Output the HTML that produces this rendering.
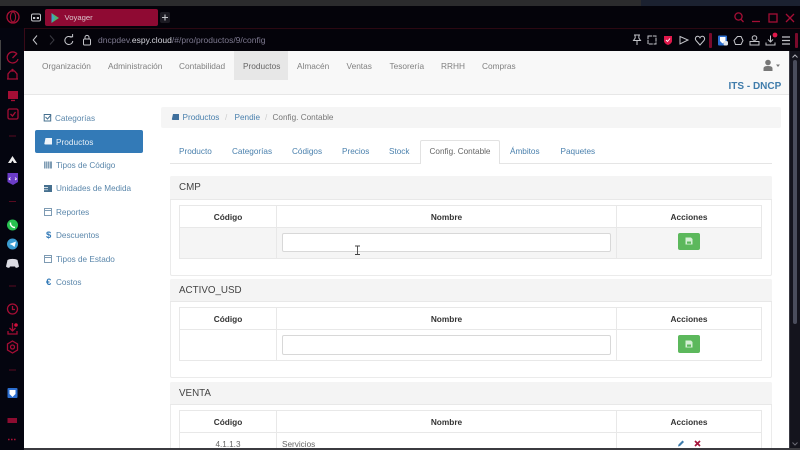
<!DOCTYPE html>
<html lang="es"><head><meta charset="utf-8"><title>Voyager</title>
<style>
html,body{margin:0;padding:0;background:#04030a}
#r{position:relative;width:800px;height:450px;overflow:hidden;background:#04030a;font-family:"Liberation Sans",sans-serif;font-size:8.2px;color:#555;filter:blur(.3px)}
#r div,#r span.t,#r svg{position:absolute}
.t{position:absolute;white-space:nowrap;line-height:12px}
.c{text-align:center}
.lk{color:#4a80ad}
.sb{color:#5b87ab;font-size:8.2px}
.nv{color:#808080;font-size:8.3px;top:60px}
.h{font-size:9.8px;color:#444}
.th{font-weight:bold;color:#333;font-size:8.3px;text-align:center}
.ic{fill:none;stroke:#a50e35;stroke-width:1.3}
.wh{fill:none;stroke:#c4c5ca;stroke-width:1}
.panel{background:#fff;border:1px solid #ebebeb;border-radius:2px;box-sizing:border-box}
.ph{background:#f4f4f4;border-bottom:1px solid #e8e8e8;box-sizing:border-box;border-radius:2px 2px 0 0}
.tb{border:1px solid #e8e8e8;box-sizing:border-box;background:#fff}
.ln{background:#e8e8e8}
.inp{background:#fff;border:1px solid #d8d8d8;border-radius:2px;box-sizing:border-box}
.btn{background:#5cb85c;border-radius:2px}
</style></head>
<body><div id="r">
<!-- top strip -->
<div style="left:0;top:0;width:641px;height:6px;background:#2b2b2d"></div>
<div style="left:641px;top:0;width:159px;height:6px;background:#1b2130"></div>
<!-- tab bar -->
<svg style="left:0;top:6px" width="24" height="22"><circle cx="13" cy="11" r="6" fill="none" stroke="#a81035" stroke-width="1.3"/><ellipse cx="13" cy="11" rx="2.6" ry="5" fill="none" stroke="#a81035" stroke-width="1.1"/></svg>
<svg style="left:30px;top:12px" width="14" height="11"><rect x="1.5" y="2" width="9" height="7" rx="1.5" class="wh"/><rect x="3" y="5" width="2.2" height="2" fill="#c4c5ca"/><rect x="6.8" y="5" width="2.2" height="2" fill="#c4c5ca"/></svg>
<div style="left:45px;top:9px;width:113px;height:17px;background:#8f0a33;border-radius:2px"></div>
<svg style="left:50px;top:12px" width="11" height="12"><polygon points="1.5,1 9,6 1.5,11" fill="#4fb36a"/><polygon points="1.5,1 5,6 1.5,11" fill="#3ea4c4"/></svg>
<span class="t" style="left:64.5px;top:11.5px;font-size:7.7px;color:#dcc5cd">Voyager</span>
<div style="left:160px;top:12px;width:10px;height:11px;background:#1b1a22;border-radius:2px"></div>
<svg style="left:160px;top:12px" width="10" height="11"><path d="M5 2.5V8.5M2 5.5H8" stroke="#c4c5ca" stroke-width="1.1"/></svg>
<!-- window controls -->
<svg style="left:730px;top:10px" width="70" height="16">
<circle cx="8.5" cy="6.5" r="3.6" class="ic"/><path d="M11 9.3L13.5 12" class="ic"/>
<path d="M22 11.5H30" class="ic"/>
<rect x="39" y="4" width="8" height="8" class="ic"/>
<path d="M56 4L64 12M64 4L56 12" class="ic"/></svg>
<!-- address bar -->
<div style="left:24px;top:28px;width:776px;height:1px;background:#2c0812"></div>
<div style="left:24px;top:28px;width:1px;height:23px;background:#3a0a18"></div>
<svg style="left:30px;top:33px" width="70" height="14">
<path d="M7 2.5L3.2 7L7 11.5" class="wh"/>
<path d="M20 2.5L24 7L20 11.5" fill="none" stroke="#3a3a42" stroke-width="1"/>
<path d="M41.5 4.5A4 4 0 1 0 42.8 8" class="wh"/><path d="M39.5 3.7L42.6 3.7L42.6 1" class="wh"/>
</svg>
<svg style="left:82px;top:34px" width="10" height="12"><rect x="1.5" y="5" width="7" height="6" rx="1" class="wh"/><path d="M3 5V3.4a2 2 0 0 1 4 0V5" class="wh"/></svg>
<span class="t" style="left:98px;top:34px;font-size:8.5px;color:#7d798f">dncpdev.<span style="color:#d4d4dc">espy.cloud</span>/#/pro/productos/9/config</span>
<svg style="left:630px;top:30px" width="130" height="21">
<path d="M4 5H10M5 5L5.2 8L3.5 10.5H10.5L8.8 8L9 5M7 10.5V15" class="wh"/>
<rect x="18" y="6" width="8" height="8" fill="none" stroke="#c4c5ca" stroke-width="1" stroke-dasharray="4 .8"/>
<path d="M34 6H42V11C42 13 39.5 14.5 38 15C36.5 14.5 34 13 34 11Z" fill="#e0184b"/><path d="M36 10L37.5 11.5L40 8.5" stroke="#fff" stroke-width=".9" fill="none"/>
<path d="M50 6.5L58 10L50 14Z" class="wh"/>
<path d="M70 15L66 10.5C64.5 8.5 66 6 68 6.3C69 6.5 69.6 7 70 7.8C70.4 7 71 6.5 72 6.3C74 6 75.5 8.5 74 10.5Z" class="wh"/>
<rect x="79" y="3" width="3" height="15" fill="#7a0a2b" rx="1"/>
<rect x="88" y="5.5" width="9" height="10" fill="#2d6fd0" rx="1"/><path d="M90 7H95.5V11L92.5 13.5L90 11Z" fill="#fff"/><rect x="93.5" y="11" width="4.5" height="4.5" rx="1.5" fill="#dfe3ea"/>
<path d="M104 10.5L107.5 6.5H111L113 10.5L111 14.5H105.5Z" class="wh"/>
<rect x="120" y="11.5" width="9" height="3.5" class="wh"/><circle cx="124.5" cy="8" r="2.3" class="wh"/>
</svg>
<svg style="left:760px;top:30px" width="40" height="21">
<path d="M10.5 5.5V12M8 9.5L10.5 12L13 9.5M6 12.5V15H15V12.5" class="wh"/>
<circle cx="15" cy="5" r="2.4" fill="#e0184b"/>
<path d="M22 7H30M22 10.5H30M22 14H30" stroke="#c4c5ca" stroke-width="1.2"/>
<rect x="35" y="3" width="3" height="15" fill="#7a0a2b" rx="1"/>
</svg>
<!-- left sidebar -->
<div style="left:0;top:28px;width:24px;height:422px;background:#04050f"></div>
<div style="left:0;top:40px;width:1px;height:30px;background:#444"></div>
<svg style="left:0;top:50px" width="24" height="400">
<path d="M17 4A5.5 5.5 0 1 0 18 9" class="ic"/><path d="M12.5 8L17 3.5" class="ic"/>
<path d="M8 29V24L10.5 21H14.5L17 24V29ZM7 29H18" class="ic"/><circle cx="12.5" cy="20" r="1.2" fill="#a50e35"/>
<rect x="8" y="41" width="10" height="8" fill="#a50e35"/><path d="M11 50.5H15" class="ic"/>
<rect x="8" y="59" width="10" height="10" rx="1.5" class="ic"/><path d="M10.5 64L12.5 66L15.5 62" class="ic"/>
<path d="M9 86H16" stroke="#5a0a20" stroke-width="1"/>
<path d="M12.5 106L8 113H11L12.5 110.5L14 113H17Z" fill="#ececec"/>
<path d="M7.5 123H18V132L13 135L7.5 132Z" fill="#6b3cc7"/><path d="M10.5 127.5L9 129L10.5 130M15 127.5L16.5 129L15 130" stroke="#fff" stroke-width=".8" fill="none"/>
<path d="M9 151.5H16" stroke="#5a0a20" stroke-width="1"/>
<circle cx="12.5" cy="175" r="5.5" fill="#27c04f"/><path d="M10.5 172.5C10 175 12 177.5 15 177.5" stroke="#fff" stroke-width="1.4" fill="none"/>
<circle cx="12.5" cy="194" r="5.5" fill="#3a9bd0"/><path d="M9.5 194L16 191.5L14.5 197L12 195Z" fill="#fff"/>
<path d="M7.5 210C10 208.5 15 208.5 17.5 210L19 216.5C17.5 218 16 218 15.5 217.5L15 216.5H10L9.5 217.5C9 218 7.5 218 6 216.5Z" fill="#dcdce4"/>
<path d="M9 236H16" stroke="#5a0a20" stroke-width="1"/>
<circle cx="12.5" cy="259" r="5" class="ic"/><path d="M12.5 256V259.5H15" class="ic"/>
<path d="M12.5 273V281M9.5 278L12.5 281L15.5 278M8 281V284H17V281" class="ic"/><circle cx="16" cy="275" r="1.8" fill="#d0103c"/>
<path d="M12.5 291L17.5 294V300L12.5 303L7.5 300V294Z" class="ic"/><circle cx="12.5" cy="297" r="2" class="ic"/>
<path d="M9 320H16" stroke="#5a0a20" stroke-width="1"/>
<rect x="7.5" y="338" width="10" height="10" rx="1" fill="#2d6fd0"/><path d="M9.5 340H15.5V344L12.5 347L9.5 344Z" fill="#fff"/>
<rect x="7.5" y="368" width="9.5" height="5" fill="#8c0c30"/>
<path d="M8 389.5H17" stroke="#a81035" stroke-width="1.4" stroke-dasharray="1.6 1.4"/>
</svg>
<!-- page -->
<div style="left:24px;top:51px;width:765px;height:397px;background:#fff;overflow:hidden"></div>
<!-- navbar -->
<div style="left:24px;top:51px;width:765px;height:44px;background:#f8f8f8;border-bottom:1px solid #e7e7e7;box-sizing:border-box"></div>
<div style="left:234px;top:51px;width:54px;height:29px;background:#e7e7e7"></div>
<span class="t nv" style="left:42px">Organización</span>
<span class="t nv" style="left:108px">Administración</span>
<span class="t nv" style="left:179px">Contabilidad</span>
<span class="t nv" style="left:243px;color:#666">Productos</span>
<span class="t nv" style="left:297px">Almacén</span>
<span class="t nv" style="left:346.5px">Ventas</span>
<span class="t nv" style="left:389.5px">Tesorería</span>
<span class="t nv" style="left:441px">RRHH</span>
<span class="t nv" style="left:482px">Compras</span>
<svg style="left:762px;top:59px" width="22" height="14"><circle cx="6" cy="3.5" r="2.8" fill="#777"/><path d="M1.5 12V9.5C1.5 7.5 3.5 7 6 7S10.5 7.5 10.5 9.5V12Z" fill="#777"/><path d="M14 5.5H18L16 8Z" fill="#777"/></svg>
<span class="t" style="left:728.5px;top:81px;font-size:10px;font-weight:bold;color:#3f7cab">ITS - DNCP</span>
<!-- side nav -->
<div style="left:35px;top:130px;width:108px;height:23px;background:#337ab7;border-radius:2px"></div>
<svg style="left:43px;top:113px" width="10" height="180">
<rect x="1.2" y="1.5" width="6.5" height="6.5" fill="none" stroke="#46708f" stroke-width="1"/><path d="M2.5 4L4.5 6L8 2" stroke="#46708f" fill="none"/>
<path d="M2.5 25H9V31.5H2.5C1.5 31.5 1 31 1.5 30Z" fill="#eef4fa"/>
<path d="M1 48.5H9V55.5H1Z" fill="#7e9bb3"/><path d="M2.8 48.5V55.5M4.6 48.5V55.5M6.4 48.5V55.5" stroke="#fff" stroke-width=".5"/>
<path d="M1 72H9V79H1Z" fill="#46708f"/><path d="M1 74.5H5M1 76.8H5" stroke="#fff" stroke-width=".7"/>
<rect x="1.5" y="95.5" width="7" height="7" fill="none" stroke="#7e9bb3"/><path d="M1.5 97.5H8.5" stroke="#7e9bb3"/>
<rect x="1.5" y="142.5" width="7" height="7" fill="none" stroke="#7e9bb3"/><path d="M1.5 144.5H8.5" stroke="#7e9bb3"/>
</svg>
<span class="t" style="left:46px;top:229.5px;font-size:9.5px;font-weight:bold;color:#337ab7">$</span>
<span class="t" style="left:46px;top:276.5px;font-size:9.5px;font-weight:bold;color:#337ab7">€</span>
<span class="t sb" style="left:55px;top:112.5px">Categorías</span>
<span class="t" style="left:56px;top:136px;color:#e8f0f7;font-size:8.3px">Productos</span>
<span class="t sb" style="left:56px;top:159.5px">Tipos de Código</span>
<span class="t sb" style="left:56px;top:183px">Unidades de Medida</span>
<span class="t sb" style="left:56px;top:206.5px">Reportes</span>
<span class="t sb" style="left:56px;top:230px">Descuentos</span>
<span class="t sb" style="left:56px;top:253.5px">Tipos de Estado</span>
<span class="t sb" style="left:56px;top:277px">Costos</span>
<!-- breadcrumb -->
<div style="left:161px;top:107px;width:620px;height:21px;background:#f5f5f5;border-radius:2px"></div>
<svg style="left:171px;top:113px" width="9" height="9"><path d="M2 1H8V7H2C1 7 .6 6.5 1 5.5Z" fill="#3f6f9c"/></svg>
<span class="t lk" style="left:182.5px;top:111.5px">Productos</span>
<span class="t" style="left:225px;top:111.5px;color:#ccc">/</span>
<span class="t lk" style="left:234.5px;top:111.5px">Pendie</span>
<span class="t" style="left:265px;top:111.5px;color:#ccc">/</span>
<span class="t" style="left:272.5px;top:111.5px;color:#777">Config. Contable</span>
<!-- tabs -->
<div style="left:170px;top:163px;width:602px;height:1px;background:#e5e5e5"></div>
<div style="left:420px;top:140px;width:80px;height:24px;background:#fff;border:1px solid #e2e2e2;border-bottom:0;box-sizing:border-box;border-radius:2px 2px 0 0"></div>
<span class="t lk" style="left:179px;top:146px">Producto</span>
<span class="t lk" style="left:232px;top:146px">Categorías</span>
<span class="t lk" style="left:292px;top:146px">Códigos</span>
<span class="t lk" style="left:342px;top:146px">Precios</span>
<span class="t lk" style="left:389px;top:146px">Stock</span>
<span class="t" style="left:429.5px;top:146px;color:#666">Config. Contable</span>
<span class="t lk" style="left:510px;top:146px">Ámbitos</span>
<span class="t lk" style="left:560.5px;top:146px">Paquetes</span>
<!-- CMP panel -->
<div class="panel" style="left:170px;top:176px;width:602px;height:100px"></div>
<div class="ph" style="left:170px;top:176px;width:602px;height:24px"></div>
<span class="t h" style="left:179px;top:182px">CMP</span>
<div class="tb" style="left:179px;top:205px;width:583px;height:54px"></div>
<div style="left:180px;top:228px;width:581px;height:30px;background:#f5f5f5"></div>
<div class="ln" style="left:180px;top:227px;width:581px;height:1px"></div>
<div class="ln" style="left:276px;top:206px;width:1px;height:52px"></div>
<div class="ln" style="left:616px;top:206px;width:1px;height:52px"></div>
<span class="t th" style="left:180px;width:96px;top:210.5px">Código</span>
<span class="t th" style="left:277px;width:339px;top:210.5px">Nombre</span>
<span class="t th" style="left:617px;width:144px;top:210.5px">Acciones</span>
<div class="inp" style="left:282px;top:233px;width:329px;height:19px"></div>
<div class="btn" style="left:678px;top:233px;width:22px;height:17px"></div>
<svg style="left:685px;top:237px" width="8" height="8"><path d="M.5.5H6L7.5 2V7.5H.5Z" fill="#d5efd5"/><rect x="2" y="4.5" width="4" height="2.2" fill="#5cb85c"/></svg>
<svg style="left:353px;top:245px" width="9" height="11"><path d="M2 1H7M2 9.5H7M4.5 1V9.5" stroke="#444" stroke-width=".9" fill="none"/></svg>
<!-- ACTIVO panel -->
<div class="panel" style="left:170px;top:279px;width:602px;height:99px"></div>
<div class="ph" style="left:170px;top:279px;width:602px;height:23px"></div>
<span class="t h" style="left:179px;top:285px">ACTIVO_USD</span>
<div class="tb" style="left:179px;top:307px;width:583px;height:54px"></div>
<div class="ln" style="left:180px;top:329px;width:581px;height:1px"></div>
<div class="ln" style="left:276px;top:308px;width:1px;height:52px"></div>
<div class="ln" style="left:616px;top:308px;width:1px;height:52px"></div>
<span class="t th" style="left:180px;width:96px;top:313px">Código</span>
<span class="t th" style="left:277px;width:339px;top:313px">Nombre</span>
<span class="t th" style="left:617px;width:144px;top:313px">Acciones</span>
<div class="inp" style="left:282px;top:335px;width:329px;height:20px"></div>
<div class="btn" style="left:678px;top:335px;width:22px;height:18px"></div>
<svg style="left:685px;top:340px" width="8" height="8"><path d="M.5.5H6L7.5 2V7.5H.5Z" fill="#d5efd5"/><rect x="2" y="4.5" width="4" height="2.2" fill="#5cb85c"/></svg>
<!-- VENTA panel -->
<div class="panel" style="left:170px;top:382px;width:602px;height:80px"></div>
<div class="ph" style="left:170px;top:382px;width:602px;height:23px"></div>
<span class="t h" style="left:179px;top:388px">VENTA</span>
<div class="tb" style="left:179px;top:410px;width:583px;height:50px"></div>
<div class="ln" style="left:180px;top:432px;width:581px;height:1px"></div>
<div class="ln" style="left:276px;top:411px;width:1px;height:40px"></div>
<div class="ln" style="left:616px;top:411px;width:1px;height:40px"></div>
<span class="t th" style="left:180px;width:96px;top:416px">Código</span>
<span class="t th" style="left:277px;width:339px;top:416px">Nombre</span>
<span class="t th" style="left:617px;width:144px;top:416px">Acciones</span>
<span class="t c" style="left:180px;width:96px;top:438.5px;color:#666">4.1.1.3</span>
<span class="t" style="left:282px;top:438.5px;color:#666">Servicios</span>
<svg style="left:676px;top:439px" width="30" height="9"><path d="M2 7.5L2.5 5.5L6.5 1.5L8 3L4 7Z" fill="#3f7cab"/><path d="M19 2L24 7M24 2L19 7" stroke="#a6153b" stroke-width="1.7"/></svg>
<!-- scrollbar -->
<div style="left:789px;top:51px;width:1px;height:397px;background:#3a3a44"></div>
<div style="left:790px;top:51px;width:10px;height:399px;background:#14141d"></div>
<div style="left:793px;top:60px;width:4px;height:264px;background:#4a4d5c;border-radius:2px"></div>
<svg style="left:790px;top:52px" width="10" height="8"><path d="M2.5 5.5L5 3L7.5 5.5" fill="none" stroke="#b5b5bd" stroke-width="1"/></svg>
<svg style="left:790px;top:440px" width="10" height="8"><path d="M2.5 2.5L5 5L7.5 2.5" fill="none" stroke="#6a6a74" stroke-width="1"/></svg>
<!-- bottom edge -->
<div style="left:24px;top:448px;width:776px;height:2px;background:#3b3b40"></div>
</div></body></html>
